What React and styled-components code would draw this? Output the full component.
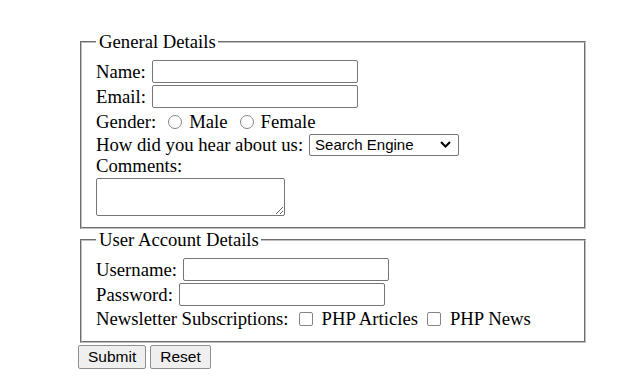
import React from "react";
import styled, { createGlobalStyle } from "styled-components";

const GlobalStyle = createGlobalStyle`
  html, body {
    margin: 0;
    padding: 0;
    background: #ffffff;
  }
  body {
    font-family: "Liberation Serif", "Times New Roman", serif;
    font-size: 18.7px;
    color: #000;
  }
`;

const Page = styled.div`
  padding: 31px 0 0 78px;
`;

const Form = styled.form`
  width: 510px;
  margin: 0;
`;

const Fieldset = styled.fieldset`
  margin: 0 2px;
  padding: 7px 13px 11px 14px;
  border: 2px groove rgb(192, 192, 192);
  min-width: 0;
`;

const Legend = styled.legend`
  padding: 0 2px 0 3px;
  line-height: 21px;
  font-size: 18.7px;
`;

const Row = styled.div`
  display: flex;
  align-items: center;
  height: ${(p) => p.$h}px;
  line-height: 21px;
  white-space: nowrap;
`;

const Label = styled.label`
  margin-right: ${(p) => (p.$gap != null ? p.$gap : 6)}px;
`;

const TextInput = styled.input`
  box-sizing: border-box;
  width: 206px;
  height: 23px;
  margin: 0;
  padding: 1px 3px;
  border: 1px solid #767676;
  border-radius: 2px;
  background: #fff;
  font-family: "Liberation Sans", Arial, sans-serif;
  font-size: 15px;
`;

const Radio = styled.input.attrs({ type: "radio" })`
  appearance: none;
  -webkit-appearance: none;
  box-sizing: border-box;
  width: 14px;
  height: 14px;
  margin: 1px 7px 0 12px;
  border: 1px solid #858585;
  border-radius: 50%;
  background: #fff;
`;

const Checkbox = styled.input.attrs({ type: "checkbox" })`
  appearance: none;
  -webkit-appearance: none;
  box-sizing: border-box;
  width: 14px;
  height: 14px;
  margin: 1px 9px 0 ${(p) => p.$ml}px;
  border: 1px solid #858585;
  border-radius: 2px;
  background: #fff;
`;

const SelectWrap = styled.span`
  position: relative;
  display: inline-block;
  width: 150px;
  height: 22px;
`;

const Select = styled.select`
  appearance: none;
  -webkit-appearance: none;
  box-sizing: border-box;
  width: 150px;
  height: 22px;
  margin: 0;
  padding: 0 20px 0 5px;
  border: 1px solid #767676;
  border-radius: 2px;
  background: #fff;
  color: #000;
  font-family: "Liberation Sans", Arial, sans-serif;
  font-size: 15px;
`;

const Chevron = styled.svg`
  position: absolute;
  right: 8px;
  top: 8px;
  pointer-events: none;
`;

const TextArea = styled.textarea`
  display: block;
  box-sizing: border-box;
  width: 189px;
  height: 38px;
  margin: 2px 0 0;
  padding: 2px;
  border: 1px solid #767676;
  border-radius: 2px;
  font-family: "Liberation Mono", monospace;
  font-size: 14px;
  resize: both;
`;

const Buttons = styled.div`
  display: flex;
  gap: 4px;
  margin-top: 2px;
`;

const Button = styled.button`
  box-sizing: border-box;
  height: 24px;
  margin: 0;
  padding: 0 9px;
  border: 1px solid #8f8f8f;
  border-radius: 2px;
  background: #efefef;
  color: #000;
  font-family: "Liberation Sans", Arial, sans-serif;
  font-size: 15.5px;
`;

export default function App() {
  return (
    <>
      <GlobalStyle />
      <Page>
        <Form onSubmit={(e) => e.preventDefault()}>
          <Fieldset>
            <Legend>General Details</Legend>
            <Row $h={25}>
              <Label>Name:</Label>
              <TextInput type="text" />
            </Row>
            <Row $h={25}>
              <Label>Email:</Label>
              <TextInput type="text" />
            </Row>
            <Row $h={24}>
              <Label $gap={0}>Gender:</Label>
              <Radio name="gender" />
              <span>Male</span>
              <Radio name="gender" />
              <span>Female</span>
            </Row>
            <Row $h={22}>
              <Label>How did you hear about us:</Label>
              <SelectWrap>
                <Select defaultValue="search">
                  <option value="search">Search Engine</option>
                  <option value="friend">Friend</option>
                  <option value="other">Other</option>
                </Select>
                <Chevron width="11" height="7" viewBox="0 0 11 7">
                  <path d="M1 1 L5.5 5.5 L10 1" fill="none" stroke="#000" strokeWidth="2" />
                </Chevron>
              </SelectWrap>
            </Row>
            <Row $h={21}>
              <span>Comments:</span>
            </Row>
            <TextArea />
          </Fieldset>
          <Fieldset>
            <Legend>User Account Details</Legend>
            <Row $h={25}>
              <Label>Username:</Label>
              <TextInput type="text" />
            </Row>
            <Row $h={25}>
              <Label>Password:</Label>
              <TextInput type="password" />
            </Row>
            <Row $h={23}>
              <Label $gap={0}>Newsletter Subscriptions:</Label>
              <Checkbox $ml={10} />
              <span>PHP Articles</span>
              <Checkbox $ml={9} />
              <span>PHP News</span>
            </Row>
          </Fieldset>
          <Buttons>
            <Button type="submit">Submit</Button>
            <Button type="reset">Reset</Button>
          </Buttons>
        </Form>
      </Page>
    </>
  );
}
